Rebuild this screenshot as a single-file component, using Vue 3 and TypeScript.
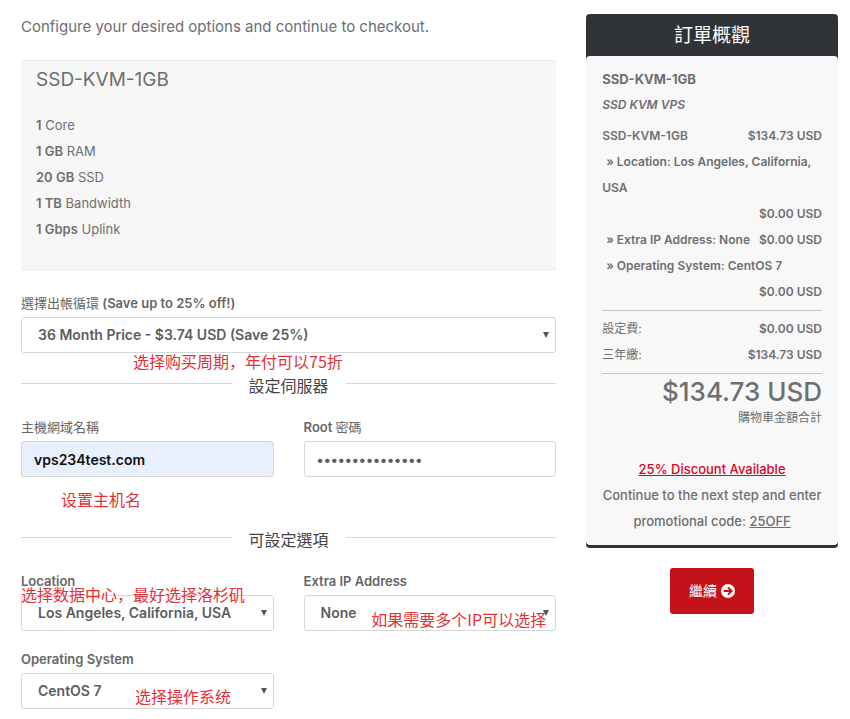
<script setup lang="ts">
import { ref } from 'vue'

interface Spec { amount: string; label: string }
interface Line { label: string; price: string; option: boolean }

const specs: Spec[] = [
  { amount: '1', label: 'Core' },
  { amount: '1 GB', label: 'RAM' },
  { amount: '20 GB', label: 'SSD' },
  { amount: '1 TB', label: 'Bandwidth' },
  { amount: '1 Gbps', label: 'Uplink' },
]

const lines: Line[] = [
  { label: 'SSD-KVM-1GB', price: '$134.73 USD', option: false },
  { label: '» Location: Los Angeles, California, USA', price: '$0.00 USD', option: true },
  { label: '» Extra IP Address: None', price: '$0.00 USD', option: true },
  { label: '» Operating System: CentOS 7', price: '$0.00 USD', option: true },
]

const fees: Line[] = [
  { label: '設定費:', price: '$0.00 USD', option: false },
  { label: '三年繳:', price: '$134.73 USD', option: false },
]

const cycle = ref('36 Month Price - $3.74 USD (Save 25%)')
const hostname = ref('vps234test.com')
const password = ref('abcdefghijklmno')
const location = ref('Los Angeles, California, USA')
const extraIp = ref('None')
const system = ref('CentOS 7')
</script>

<template>
  <div class="page">
    <main class="config">
      <p class="intro">Configure your desired options and continue to checkout.</p>

      <section class="product">
        <h2>SSD-KVM-1GB</h2>
        <ul>
          <li v-for="s in specs" :key="s.label"><b>{{ s.amount }}</b> {{ s.label }}</li>
        </ul>
      </section>

      <div class="field">
        <label for="cycle"><span class="han">選擇出帳循環</span> (Save up to 25% off!)</label>
        <div class="select">
          <select id="cycle" v-model="cycle"><option>36 Month Price - $3.74 USD (Save 25%)</option></select>
          <svg viewBox="0 0 6 6"><path d="M0 0h6L3 6z" /></svg>
        </div>
        <span class="note note-cycle">选择购买周期，年付可以75折</span>
      </div>

      <h3 class="divider"><span>設定伺服器</span></h3>

      <div class="fields">
        <div class="field">
          <label for="host"><span class="han">主機網域名稱</span></label>
          <input id="host" v-model="hostname" class="filled" type="text">
          <span class="note note-host">设置主机名</span>
        </div>
        <div class="field">
          <label for="root">Root <span class="han">密碼</span></label>
          <input id="root" v-model="password" type="password">
        </div>
      </div>

      <h3 class="divider divider-options"><span>可設定選項</span></h3>

      <div class="fields">
        <div class="field">
          <label for="location">Location</label>
          <div class="select">
            <select id="location" v-model="location"><option>Los Angeles, California, USA</option></select>
            <svg viewBox="0 0 6 6"><path d="M0 0h6L3 6z" /></svg>
          </div>
          <span class="note note-location">选择数据中心，最好选择洛杉矶</span>
        </div>
        <div class="field">
          <label for="ip">Extra IP Address</label>
          <div class="select">
            <select id="ip" v-model="extraIp"><option>None</option></select>
            <svg viewBox="0 0 6 6"><path d="M0 0h6L3 6z" /></svg>
          </div>
          <span class="note note-ip">如果需要多个IP可以选择</span>
        </div>
        <div class="field">
          <label for="os">Operating System</label>
          <div class="select">
            <select id="os" v-model="system"><option>CentOS 7</option></select>
            <svg viewBox="0 0 6 6"><path d="M0 0h6L3 6z" /></svg>
          </div>
          <span class="note note-os">选择操作系统</span>
        </div>
      </div>
    </main>

    <aside class="side">
      <section class="summary">
        <h2>訂單概觀</h2>
        <div class="body">
          <strong class="name">SSD-KVM-1GB</strong>
          <em class="group">SSD KVM VPS</em>
          <div class="lines">
            <div v-for="l in lines" :key="l.label" class="line">
              <span :class="{ option: l.option }">{{ l.label }}</span>
              <span class="price">{{ l.price }}</span>
            </div>
          </div>
          <div class="lines ruled">
            <div v-for="f in fees" :key="f.label" class="line">
              <span class="han">{{ f.label }}</span>
              <span class="price">{{ f.price }}</span>
            </div>
          </div>
          <div class="total">
            <span class="sum">$134.73 USD</span>
            <span class="han">購物車金額合計</span>
          </div>
          <p class="promo">
            <u class="deal">25% Discount Available</u><br>
            Continue to the next step and enter promotional code: <u>25OFF</u>
          </p>
        </div>
      </section>
      <button type="button" class="next">
        繼續
        <svg viewBox="0 0 14 14">
          <circle cx="7" cy="7" r="7" fill="#fff" />
          <path d="M2.8 7h7.4M7 3.4 10.6 7 7 10.6" fill="none" stroke="#c4121a" stroke-width="2" />
        </svg>
      </button>
    </aside>
  </div>
</template>

<style>
body {
  margin: 0;
  background: #fff;
}
</style>

<style scoped>
.page {
  display: grid;
  grid-template-columns: minmax(0, 17fr) minmax(0, 8fr);
  column-gap: 30px;
  align-items: start;
  padding: 14px 12px 10px 21px;
  color: #6d6f71;
  font: 400 13px/26px Inter, "Noto Sans CJK TC", sans-serif;
}
* { box-sizing: border-box; }
h2, h3, p, ul { margin: 0; padding: 0; font-weight: 400; }
.intro { margin-bottom: 20px; font-size: 15px; }
.product {
  margin-bottom: 20px;
  padding: 6px 15px 27px;
  border: solid #ececec;
  border-width: 1px 0;
  background: #f7f7f7;
}
.product h2 { margin-bottom: 19px; font-size: 19px; }
.product ul { list-style: none; }
.product b { font-weight: 600; }
.han { font-weight: 400; }
.field { position: relative; display: grid; gap: 1px; }
.field label { font-weight: 600; color: #666; white-space: nowrap; }
.fields {
  display: grid;
  grid-template-columns: repeat(2, minmax(0, 1fr));
  gap: 15px 30px;
}
.select { position: relative; display: grid; }
.select svg {
  position: absolute;
  top: 15px;
  right: 7px;
  width: 6px;
  height: 6px;
  fill: #555;
  pointer-events: none;
}
select, input {
  width: 100%;
  height: 36px;
  margin: 0;
  border: 1px solid #d5d7d8;
  border-radius: 3px;
  background: #fff;
  color: #5c5d5f;
  font: 600 14px/20px Inter, "Noto Sans CJK TC", sans-serif;
  appearance: none;
}
select { padding: 0 16px; }
input { padding: 0 12px; }
input.filled { background: #e8f0fe; color: #111; font-weight: 600; }
.divider {
  display: flex;
  align-items: flex-start;
  gap: 17px;
  margin: 21px 0 16px;
  color: #444;
  font-size: 16px;
  line-height: 24px;
}
.divider-options { margin-top: 51px; }
.divider::before, .divider::after {
  content: "";
  flex: 1;
  margin-top: 9px;
  border-top: 1px solid #d5d7d8;
}
.note {
  position: absolute;
  color: #e23238;
  font: 400 16px/24px "Noto Sans CJK SC", sans-serif;
  white-space: nowrap;
}
.note-cycle { top: 59px; left: 112px; }
.note-host { top: 73px; left: 40px; }
.note-location { top: 14px; left: 0; }
.note-ip { top: 39px; right: 10px; }
.note-os { top: 38px; left: 114px; }
.side { display: flex; flex-direction: column; align-items: center; gap: 20px; }
.summary {
  width: 100%;
  border-bottom: 3px solid #2f3337;
  border-radius: 4px;
  background: #2f3337;
}
.summary h2 {
  padding-top: 2px;
  color: #fff;
  font-size: 19px;
  line-height: 40px;
  text-align: center;
}
.body {
  padding: 10px 16px 11px;
  border-radius: 4px;
  background: #f8f8f8;
  font-weight: 500;
}
.name, .group { display: block; }
.name { font-weight: 700; }
.group, .lines, .total { font-size: 12px; }
.group { font-weight: 600; }
.lines { padding: 5px 0; font-weight: 600; }
.ruled { border: solid #c4c4c4; border-width: 1px 0; }
.line { display: flex; flex-wrap: wrap; justify-content: space-between; }
.option { text-indent: 4px; }
.price { margin-left: auto; }
.total { display: flex; flex-direction: column; align-items: flex-end; }
.sum { font-size: 26px; line-height: 36px; }
.total .han { line-height: 16px; }
.promo { margin-top: 30px; font-weight: 500; text-align: center; }
.deal { color: #d9062a; }
.next {
  display: flex;
  align-items: center;
  gap: 4px;
  height: 46px;
  padding: 0 19px;
  border: 0;
  border-radius: 3px;
  background: #c4121a;
  color: #fff;
  font: 400 14px/20px Inter, "Noto Sans CJK TC", sans-serif;
}
.next svg { width: 14px; height: 14px; }
</style>
